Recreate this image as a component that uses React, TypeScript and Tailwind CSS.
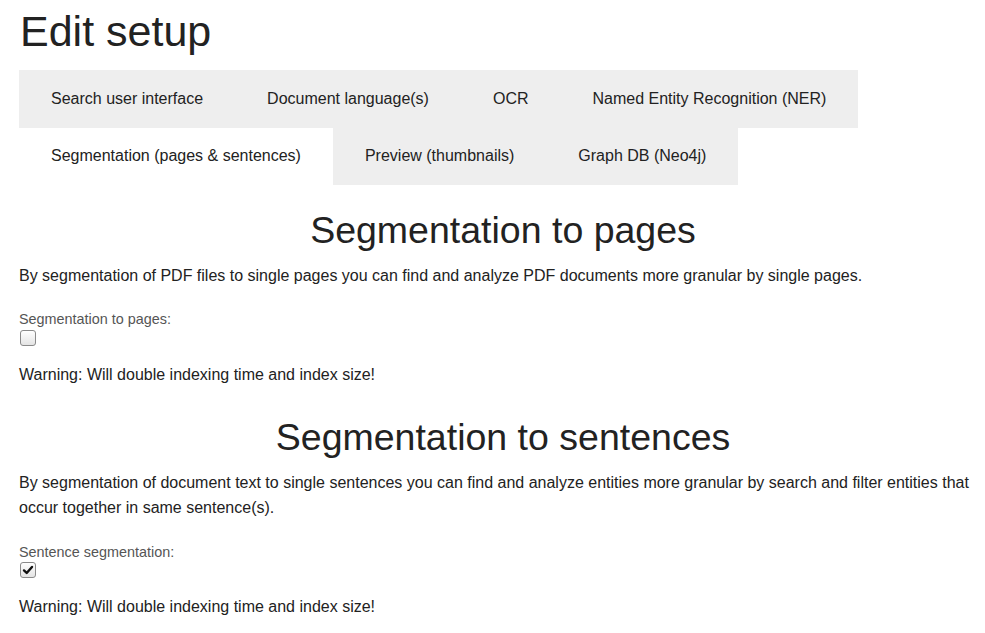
import React from 'react';

const tabs = [
    'Search user interface',
    'Document language(s)',
    'OCR',
    'Named Entity Recognition (NER)',
    'Segmentation (pages & sentences)',
    'Preview (thumbnails)',
    'Graph DB (Neo4j)',
];

function Checkbox({ checked }: { checked?: boolean }) {
    return (
        <div className="w-[16px] h-[16px] rounded-[3px] border border-[#8a8a8a] bg-gradient-to-b from-white to-[#e4e4e4] flex items-center justify-center">
            {checked && (
                <svg width="12" height="12" viewBox="0 0 12 12">
                    <path d="M2 6.4 L4.7 9 L10 3" fill="none" stroke="#111" strokeWidth="2.4" strokeLinecap="round" strokeLinejoin="round" />
                </svg>
            )}
        </div>
    );
}

function Section({ title, text, label, checked, first }: { title: string; text: string; label: string; checked?: boolean; first?: boolean }) {
    return (
        <div className={first ? 'mt-[23px]' : 'mt-[28px]'}>
            <h2 className="text-[37.5px] leading-[44px] text-center text-[#222]">{title}</h2>
            <p className="mt-[11px] text-[16px] leading-[25px] text-[#222]">{text}</p>
            <div className={`${first ? 'mt-[21px]' : 'mt-[22px]'} text-[14.4px] leading-[20px] text-[#555]`}>{label}</div>
            <div className={`${first ? 'mt-[1px]' : 'mt-0'} ml-[1px] h-[16px] flex items-center`}>
                <Checkbox checked={checked} />
            </div>
            <p className="mt-[16px] text-[16px] leading-[25px] text-[#222]">Warning: Will double indexing time and index size!</p>
        </div>
    );
}

export default function App() {
    const active = 'Segmentation (pages & sentences)';
    return (
        <div className="w-full min-h-screen bg-white overflow-hidden font-['Liberation_Sans',Arial,sans-serif] antialiased">
            <div className="w-[962px] ml-[19px] pt-[5px]">
                <h1 className="text-[43px] leading-[53px] text-[#222] pl-[1px]">Edit setup</h1>

                <ul className="mt-[12px] flex flex-wrap">
                    {tabs.map((t) => (
                        <li
                            key={t}
                            className={`h-[57.5px] px-8 flex items-center text-[16px] text-[#222] ${t === active ? 'bg-white' : 'bg-[#eeeeee]'}`}
                        >
                            {t}
                        </li>
                    ))}
                </ul>

                <div className="w-[968px]">
                    <Section
                        first
                        title="Segmentation to pages"
                        text="By segmentation of PDF files to single pages you can find and analyze PDF documents more granular by single pages."
                        label="Segmentation to pages:"
                    />
                    <Section
                        title="Segmentation to sentences"
                        text="By segmentation of document text to single sentences you can find and analyze entities more granular by search and filter entities that occur together in same sentence(s)."
                        label="Sentence segmentation:"
                        checked
                    />
                </div>
            </div>
        </div>
    );
}
